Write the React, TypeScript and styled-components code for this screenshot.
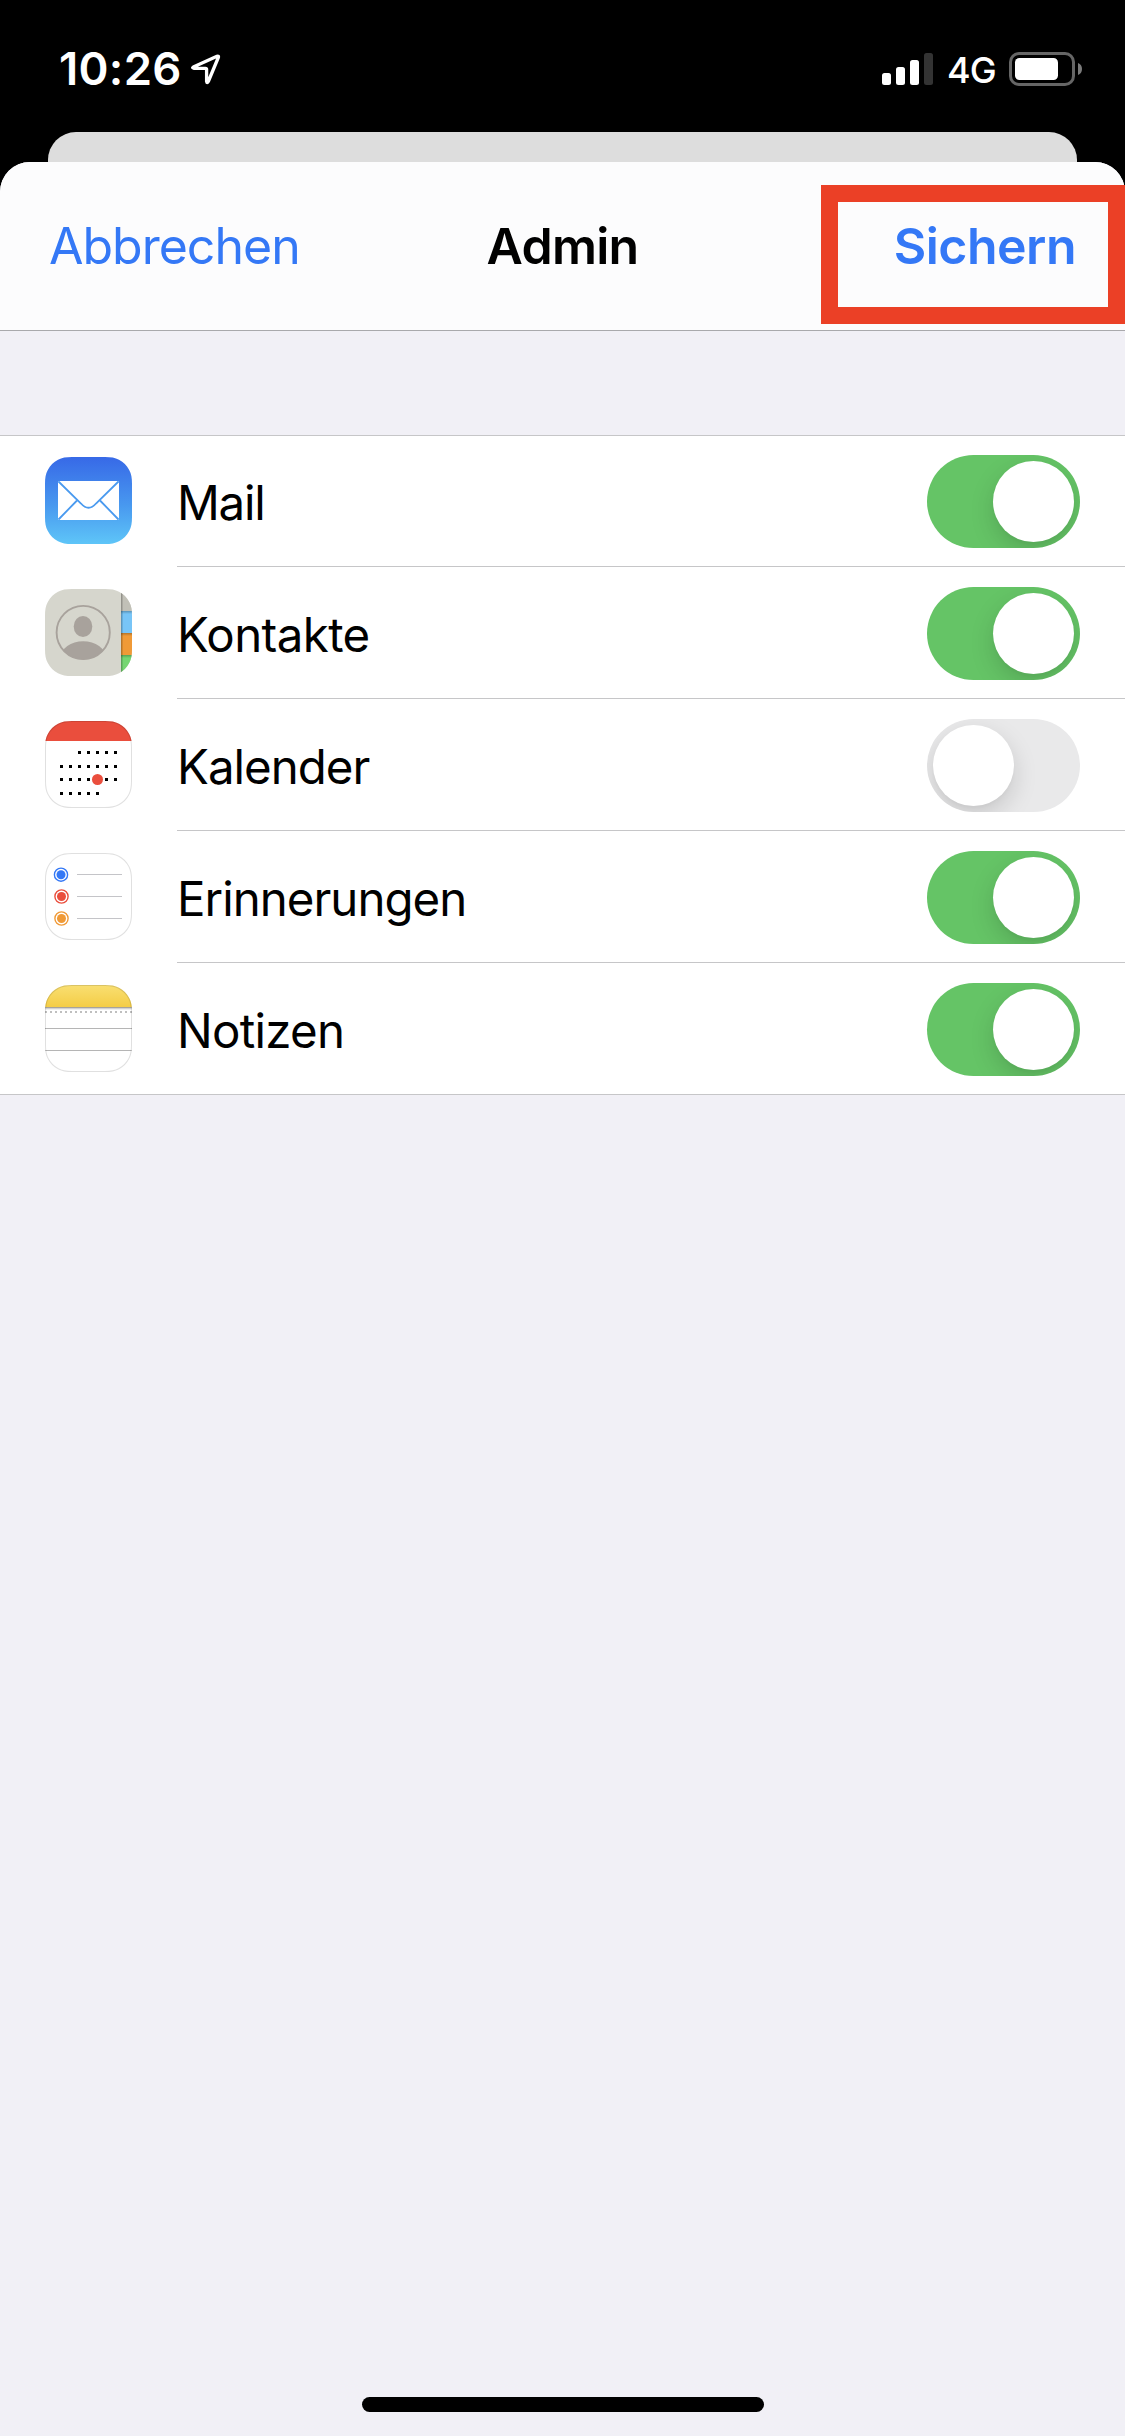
import React, { useState } from "react";
import styled, { createGlobalStyle } from "styled-components";

const GlobalStyle = createGlobalStyle`
  * { box-sizing: border-box; }
  body { margin: 0; background: #000; }
`;

const Screen = styled.div`
  display: flex;
  flex-direction: column;
  width: 1125px;
  height: 2436px;
  overflow: hidden;
  background: #000;
  font-family: Inter, "Liberation Sans", sans-serif;
`;

const StatusBar = styled.header`
  display: flex;
  justify-content: space-between;
  align-items: center;
  height: 132px;
  padding: 6px 43px 0 59px;
  color: #fff;
`;

const StatusGroup = styled.div`
  display: flex;
  align-items: center;
`;

const Clock = styled.span`
  width: 132px;
  font-size: 45.5px;
  font-weight: 600;
  letter-spacing: 0.3px;
  line-height: 54px;
  white-space: nowrap;
`;

const Network = styled.span`
  width: 75px;
  padding: 2px 0 0 13px;
  font-size: 36px;
  font-weight: 450;
  letter-spacing: -1px;
  line-height: 42px;
`;

const BackCard = styled.div`
  height: 30px;
  margin: 0 48px;
  border-radius: 28px 28px 0 0;
  background: #ddd;
`;

const Sheet = styled.main`
  display: flex;
  flex: 1;
  flex-direction: column;
  border-radius: 30px 30px 0 0;
  background: #f1f0f6;
`;

const NavBar = styled.nav`
  position: relative;
  display: grid;
  grid-template-columns: 1fr auto 1fr;
  align-items: center;
  height: 169px;
  padding: 0 49px;
  border-bottom: 1px solid #a9a9ac;
  border-radius: 30px 30px 0 0;
  background: #fcfcfd;
`;

const NavButton = styled.button<{ $primary?: boolean }>`
  justify-self: ${(p) => (p.$primary ? "end" : "start")};
  padding: 0;
  border: 0;
  background: none;
  color: #3478f6;
  font: ${(p) => (p.$primary ? 600 : 400)} 50px/60px Inter, "Liberation Sans", sans-serif;
  letter-spacing: ${(p) => (p.$primary ? "-0.5px" : "-1px")};
`;

const Title = styled.h1`
  margin: 0;
  color: #000;
  font-size: 50px;
  font-weight: 600;
  line-height: 60px;
  letter-spacing: -0.7px;
`;

const Highlight = styled.div`
  position: absolute;
  top: 23px;
  right: 0;
  width: 304px;
  height: 139px;
  border: 17px solid #eb4026;
  pointer-events: none;
`;

const List = styled.ul`
  margin: 104px 0 0;
  padding: 0;
  list-style: none;
  background: #fff;
  box-shadow: inset 0 1px #c6c6c8, inset 0 -1px #c6c6c8;
`;

const Row = styled.li`
  display: flex;
  height: 132px;
  padding-left: 45px;
  &:last-child > div { border-bottom-color: transparent; }
`;

const IconSlot = styled.span`
  width: 132px;
  padding-top: 22px;
  svg { display: block; }
`;

const RowBody = styled.div`
  display: flex;
  flex: 1;
  justify-content: space-between;
  align-items: flex-start;
  padding: 20px 45px 0 0;
  border-bottom: 1px solid #c6c6c8;
`;

const Label = styled.span<{ $tracking: number }>`
  padding-top: 19px;
  color: #000;
  font-size: 47.4px;
  line-height: 58px;
  letter-spacing: ${(p) => p.$tracking}px;
`;

const Track = styled.button<{ $on: boolean }>`
  display: flex;
  justify-content: ${(p) => (p.$on ? "flex-end" : "flex-start")};
  width: 153px;
  height: 93px;
  padding: 6px;
  overflow: hidden;
  border: 0;
  border-radius: 47px;
  background: ${(p) => (p.$on ? "#65c466" : "#e9e9ea")};
`;

const Knob = styled.span`
  width: 81px;
  height: 81px;
  border-radius: 50%;
  background: #fff;
  box-shadow: 0 9px 24px rgba(0, 0, 0, 0.15), 0 3px 3px rgba(0, 0, 0, 0.02);
`;

const HomeArea = styled.footer`
  display: flex;
  justify-content: center;
  margin-top: auto;
  padding-bottom: 24px;
`;

const HomeIndicator = styled.span`
  width: 402px;
  height: 15px;
  border-radius: 8px;
  background: #000;
`;

/* Continuous-corner outline shared by every app icon */
const TILE =
  "M27 0H60C66 0 70 .6 74 2.8C78.600 5.300 81.700 8.400 84.200 13C86.400 17 87 21 87 27V60C87 66 86.400 70 84.200 74C81.700 78.600 78.600 81.700 74 84.200C70 86.400 66 87 60 87H27C21 87 17 86.400 13 84.200C8.400 81.700 5.300 78.600 2.800 74C.6 70 0 66 0 60V27C0 21 .6 17 2.800 13C5.300 8.400 8.400 5.300 13 2.800C17 .6 21 0 27 0Z";

function Tile({ id, outlined, children }: { id: string; outlined?: boolean; children: React.ReactNode }) {
  return (
    <svg width="87" height="87" viewBox="0 0 87 87">
      <clipPath id={id}>
        <path d={TILE} />
      </clipPath>
      <g clipPath={`url(#${id})`}>
        {children}
        {outlined && <path d={TILE} fill="none" stroke="#000" strokeOpacity="0.12" strokeWidth="2" />}
      </g>
    </svg>
  );
}

function MailIcon() {
  return (
    <Tile id="tile-mail">
      <linearGradient id="mail-sky" x1="0" y1="0" x2="0" y2="1">
        <stop offset="0" stopColor="#3769e7" />
        <stop offset="0.55" stopColor="#4898ef" />
        <stop offset="1" stopColor="#5ec5f8" />
      </linearGradient>
      <rect width="87" height="87" fill="url(#mail-sky)" />
      <rect x="13" y="24" width="61" height="39" rx="1.500" fill="#fff" />
      <g fill="none" stroke="#4a9aef" strokeWidth="1.800">
        <path d="M13.500 24.500L36 46.500Q43.500 55 51 46.500L73.500 24.500" />
        <path d="M32 43.500L13.500 62.500M55 43.500L73.500 62.500" />
      </g>
    </Tile>
  );
}

function ContactsIcon() {
  const tabs = [
    { y: 0, h: 22, fill: "#c1c0b7" },
    { y: 22, h: 22, fill: "#78c5f7" },
    { y: 44, h: 22, fill: "#f09a37" },
    { y: 66, h: 21, fill: "#76d672" },
  ];
  return (
    <Tile id="tile-contacts">
      <linearGradient id="tab-shade" x1="0" y1="0" x2="0" y2="1">
        <stop offset="0" stopColor="#000" stopOpacity="0.25" />
        <stop offset="1" stopColor="#000" stopOpacity="0" />
      </linearGradient>
      <linearGradient id="edge-shade" x1="0" y1="0" x2="1" y2="0">
        <stop offset="0" stopColor="#000" stopOpacity="0.3" />
        <stop offset="1" stopColor="#000" stopOpacity="0" />
      </linearGradient>
      <rect width="87" height="87" fill="#d6d6cd" />
      {tabs.map((t) => (
        <g key={t.y}>
          <rect x="76" y={t.y} width="11" height={t.h} fill={t.fill} />
          {t.y > 0 && <rect x="76" y={t.y} width="11" height="3" fill="url(#tab-shade)" />}
        </g>
      ))}
      <rect x="76" width="2.500" height="87" fill="url(#edge-shade)" />
      <clipPath id="portrait">
        <circle cx="38.200" cy="43.500" r="27" />
      </clipPath>
      <ellipse cx="38" cy="37.500" rx="9.300" ry="10.500" fill="#a8a29c" />
      <ellipse cx="38.200" cy="69" rx="22.500" ry="16.800" fill="#a8a29c" clipPath="url(#portrait)" />
      <circle cx="38.200" cy="43.500" r="26.600" fill="none" stroke="#a8a29c" strokeWidth="1.900" />
    </Tile>
  );
}

function CalendarIcon() {
  const weeks = [
    { y: 30, from: 2, to: 6 },
    { y: 44, from: 0, to: 6 },
    { y: 57, from: 0, to: 6 },
    { y: 71, from: 0, to: 4 },
  ];
  return (
    <Tile id="tile-calendar" outlined>
      <rect width="87" height="87" fill="#fff" />
      <rect width="87" height="20" fill="#ea4e3d" />
      {weeks.map((w) =>
        Array.from({ length: w.to - w.from + 1 }, (_, i) => (
          <rect key={`${w.y}-${i}`} x={15 + (w.from + i) * 9} y={w.y} width="3" height="3" fill="#000" />
        )),
      )}
      <circle cx="52.500" cy="58.500" r="5.500" fill="#ea4e3d" />
    </Tile>
  );
}

function RemindersIcon() {
  const items = [
    { x: 16, y: 21.7, line: 21.5, color: "#3478f6" },
    { x: 16.5, y: 43.5, line: 43.5, color: "#ea4e3d" },
    { x: 16.5, y: 65.5, line: 65.5, color: "#f09a37" },
  ];
  return (
    <Tile id="tile-reminders" outlined>
      <rect width="87" height="87" fill="#fff" />
      {items.map((it) => (
        <g key={it.color}>
          <circle cx={it.x} cy={it.y} r="6.600" fill="none" stroke={it.color} strokeWidth="1.400" />
          <circle cx={it.x} cy={it.y} r="4.500" fill={it.color} />
          <rect x="32" y={it.line - 0.5} width="45" height="1" fill="#c4c4c8" />
        </g>
      ))}
    </Tile>
  );
}

function NotesIcon() {
  return (
    <Tile id="tile-notes" outlined>
      <linearGradient id="notes-band" x1="0" y1="0" x2="0" y2="1">
        <stop offset="0" stopColor="#f9df72" />
        <stop offset="1" stopColor="#f4cd46" />
      </linearGradient>
      <rect width="87" height="87" fill="#fff" />
      <rect width="87" height="22" fill="url(#notes-band)" />
      <rect y="22" width="87" height="1" fill="#a8a499" />
      <rect y="23" width="87" height="1" fill="#d2d2d2" />
      <rect y="24" width="87" height="1" fill="#efefef" />
      <path d="M0 27H87" stroke="#bfbfbf" strokeWidth="2" strokeDasharray="2 3" />
      <path d="M0 43.500H87M0 65.500H87" stroke="#b5b5b5" strokeWidth="1" />
    </Tile>
  );
}

function LocationArrow() {
  return (
    <svg width="30" height="31" viewBox="0 0 30 31">
      <path
        d="M2.300 13L26 2.300Q28 1.700 27.300 3.500L17.300 27.500Q16 29.800 15.600 27.500V15.500Q15.600 14.300 14.400 14.300H3Q.8 14 2.300 13Z"
        fill="none"
        stroke="#fff"
        strokeWidth="3.300"
        strokeLinejoin="round"
      />
    </svg>
  );
}

function SignalBars() {
  return (
    <svg width="52" height="34" viewBox="0 0 52 34">
      <rect x="0" y="21" width="9" height="12" rx="2.500" fill="#fff" />
      <rect x="14" y="15" width="9" height="18" rx="2.500" fill="#fff" />
      <rect x="28" y="8" width="9" height="25" rx="2.500" fill="#fff" />
      <rect x="42" y="1" width="9" height="32" rx="2.500" fill="#333" />
    </svg>
  );
}

function Battery() {
  return (
    <svg width="73" height="34" viewBox="0 0 73 34">
      <rect x="1.500" y="1.500" width="63" height="31" rx="8.500" fill="none" stroke="#666" strokeWidth="3" />
      <rect x="6" y="6" width="43" height="22" rx="4.500" fill="#fff" />
      <path d="M69 11Q73 12.500 73 17T69 23Z" fill="#7b7b7b" />
    </svg>
  );
}

function Toggle({ label, initial }: { label: string; initial: boolean }) {
  const [on, setOn] = useState(initial);
  return (
    <Track $on={on} role="switch" aria-checked={on} aria-label={label} onClick={() => setOn(!on)}>
      <Knob />
    </Track>
  );
}

const services = [
  { name: "Mail", Icon: MailIcon, on: true, tracking: -1.2 },
  { name: "Kontakte", Icon: ContactsIcon, on: true, tracking: -0.6 },
  { name: "Kalender", Icon: CalendarIcon, on: false, tracking: -0.95 },
  { name: "Erinnerungen", Icon: RemindersIcon, on: true, tracking: -0.95 },
  { name: "Notizen", Icon: NotesIcon, on: true, tracking: -0.7 },
];

export default function App() {
  return (
    <Screen>
      <GlobalStyle />
      <StatusBar>
        <StatusGroup>
          <Clock>10:26</Clock>
          <LocationArrow />
        </StatusGroup>
        <StatusGroup>
          <SignalBars />
          <Network>4G</Network>
          <Battery />
        </StatusGroup>
      </StatusBar>
      <BackCard />
      <Sheet>
        <NavBar>
          <NavButton>Abbrechen</NavButton>
          <Title>Admin</Title>
          <NavButton $primary>Sichern</NavButton>
          <Highlight />
        </NavBar>
        <List>
          {services.map(({ name, Icon, on, tracking }) => (
            <Row key={name}>
              <IconSlot>
                <Icon />
              </IconSlot>
              <RowBody>
                <Label $tracking={tracking}>{name}</Label>
                <Toggle label={name} initial={on} />
              </RowBody>
            </Row>
          ))}
        </List>
        <HomeArea>
          <HomeIndicator />
        </HomeArea>
      </Sheet>
    </Screen>
  );
}
